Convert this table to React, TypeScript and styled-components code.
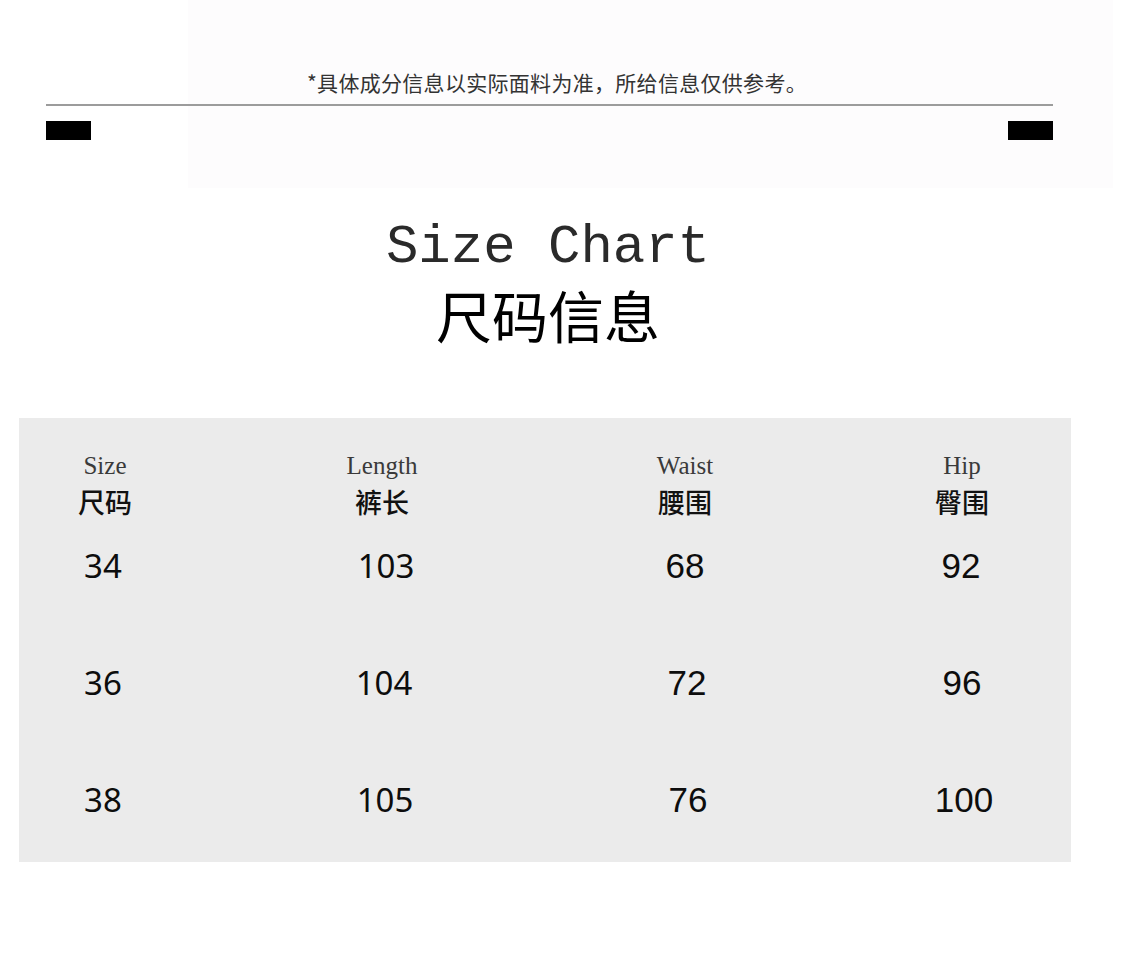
import React from "react";
import styled, { createGlobalStyle } from "styled-components";

const GlobalStyle = createGlobalStyle`
  html, body {
    margin: 0;
    padding: 0;
    background: #ffffff;
  }
  body {
    font-family: "Noto Sans", "Noto Sans CJK SC", sans-serif;
    color: #111;
  }
`;

const Page = styled.div`
  width: 1096px;
  display: flex;
  flex-direction: column;
`;

const Notice = styled.section`
  height: 188px;
  box-sizing: border-box;
  padding-top: 68px;
  background: linear-gradient(
    to right,
    #ffffff 0px,
    #ffffff 188px,
    #fdfcfd 188px,
    #fdfcfd 1113px,
    #ffffff 1113px
  );
  width: 1129px;
  display: flex;
  flex-direction: column;
`;

const NoteText = styled.p`
  margin: 0 0 0 307px;
  text-align: left;
  font-family: "Noto Sans CJK SC", "Noto Sans", sans-serif;
  font-size: 21px;
  line-height: 28px;
  color: #333;
  letter-spacing: 0.3px;
`;

const Rule = styled.div`
  margin: 8px 0 0 46px;
  width: 1007px;
  height: 2px;
  background: #9c9c9c;
`;

const MarkerRow = styled.div`
  margin: 15px 0 0 46px;
  width: 1007px;
  display: flex;
  justify-content: space-between;
`;

const Marker = styled.div`
  width: 45px;
  height: 19px;
  background: #000;
`;

const TitleBlock = styled.header`
  margin-top: 33px;
  display: flex;
  flex-direction: column;
  align-items: center;
  gap: 11px;
`;

const EnTitle = styled.h1`
  margin: 0;
  font-family: "Liberation Mono", "Courier New", monospace;
  font-weight: 400;
  font-size: 54px;
  line-height: 54px;
  color: #2a2a2a;
  white-space: pre;
`;

const CnTitle = styled.h2`
  margin: 0;
  font-family: "Noto Sans CJK SC", sans-serif;
  font-weight: 400;
  font-size: 56px;
  line-height: 56px;
  color: #000;
`;

const Table = styled.div`
  margin: 76px 0 0 19px;
  width: 1052px;
  box-sizing: border-box;
  padding: 33px 0 42px;
  background: #ebebeb;
  overflow: hidden;
  display: grid;
  grid-template-columns: 172px 382px 224px 330px;
  row-gap: 77px;
`;

const HeadCell = styled.div`
  display: flex;
  flex-direction: column;
  align-items: center;
  gap: 6px;
  margin-bottom: -48px;
`;

const HeadEn = styled.span`
  font-family: "Liberation Serif", "Times New Roman", serif;
  font-size: 25px;
  line-height: 30px;
  color: #3a3a3a;
`;

const HeadCn = styled.span`
  font-family: "Noto Sans CJK SC", sans-serif;
  font-weight: 500;
  font-size: 27px;
  line-height: 30px;
  color: #111;
`;

const ValueCell = styled.div<{ $font: string; $size: number; $dx: number }>`
  text-align: center;
  font-family: ${(p) => p.$font};
  font-size: ${(p) => p.$size}px;
  line-height: 40px;
  color: #0d0d0d;
  transform: translateX(${(p) => p.$dx}px);
`;

const columns = [
  { en: "Size", cn: "尺码", font: '"Noto Sans", sans-serif', size: 33, dx: [-2, -2, -2] },
  { en: "Length", cn: "裤长", font: '"Noto Sans", sans-serif', size: 33, dx: [4, 2, 3] },
  { en: "Waist", cn: "腰围", font: '"Liberation Sans", Arial, sans-serif', size: 35, dx: [0, 2, 3] },
  { en: "Hip", cn: "臀围", font: '"Liberation Sans", Arial, sans-serif', size: 35, dx: [-1, 0, 2] },
];

const rows = [
  ["34", "103", "68", "92"],
  ["36", "104", "72", "96"],
  ["38", "105", "76", "100"],
];

export default function App() {
  return (
    <>
      <GlobalStyle />
      <Page>
        <Notice>
          <NoteText>*具体成分信息以实际面料为准，所给信息仅供参考。</NoteText>
          <Rule />
          <MarkerRow>
            <Marker />
            <Marker />
          </MarkerRow>
        </Notice>
        <TitleBlock>
          <EnTitle>Size Chart</EnTitle>
          <CnTitle>尺码信息</CnTitle>
        </TitleBlock>
        <Table>
          {columns.map((c) => (
            <HeadCell key={c.en}>
              <HeadEn>{c.en}</HeadEn>
              <HeadCn>{c.cn}</HeadCn>
            </HeadCell>
          ))}
          {rows.map((r, ri) =>
            r.map((v, ci) => (
              <ValueCell
                key={`${ri}-${ci}`}
                $font={columns[ci].font}
                $size={columns[ci].size}
                $dx={columns[ci].dx[ri]}
              >
                {v}
              </ValueCell>
            ))
          )}
        </Table>
      </Page>
    </>
  );
}
